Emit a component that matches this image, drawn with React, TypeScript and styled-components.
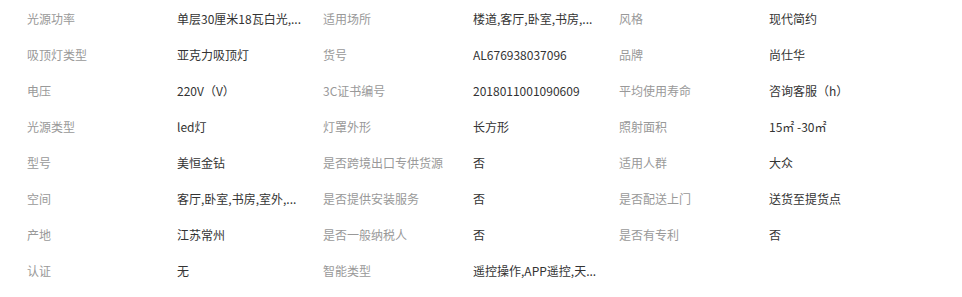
import React from "react";
import styled, { createGlobalStyle } from "styled-components";

const GlobalStyle = createGlobalStyle`
    html, body {
        margin: 0;
        padding: 0;
        background: #fff;
    }
    body {
        font-family: "Noto Sans CJK SC", "Microsoft YaHei", sans-serif;
        font-size: 12px;
    }
`;

interface Attr {
    name: string;
    value: string;
    full?: string;
}

// values are shown as the page shows them; the full text goes in the title
const attrs: Attr[] = [
    { name: "光源功率", value: "单层30厘米18瓦白光,...", full: "单层30厘米18瓦白光,单层40厘米24瓦三色光" },
    { name: "适用场所", value: "楼道,客厅,卧室,书房,...", full: "楼道,客厅,卧室,书房,餐厅,阳台" },
    { name: "风格", value: "现代简约" },
    { name: "吸顶灯类型", value: "亚克力吸顶灯" },
    { name: "货号", value: "AL676938037096" },
    { name: "品牌", value: "尚仕华" },
    { name: "电压", value: "220V（V）" },
    { name: "3C证书编号", value: "2018011001090609" },
    { name: "平均使用寿命", value: "咨询客服（h）" },
    { name: "光源类型", value: "led灯" },
    { name: "灯罩外形", value: "长方形" },
    { name: "照射面积", value: "15㎡ -30㎡" },
    { name: "型号", value: "美恒金钻" },
    { name: "是否跨境出口专供货源", value: "否" },
    { name: "适用人群", value: "大众" },
    { name: "空间", value: "客厅,卧室,书房,室外,...", full: "客厅,卧室,书房,室外,餐厅" },
    { name: "是否提供安装服务", value: "否" },
    { name: "是否配送上门", value: "送货至提货点" },
    { name: "产地", value: "江苏常州" },
    { name: "是否一般纳税人", value: "否" },
    { name: "是否有专利", value: "否" },
    { name: "认证", value: "无" },
    { name: "智能类型", value: "遥控操作,APP遥控,天...", full: "遥控操作,APP遥控,天猫精灵" },
];

const AttrList = styled.ul`
    list-style: none;
    margin: 0;
    padding: 1px 0 0 27px;
    display: grid;
    grid-template-columns: repeat(3, 296px);
    grid-auto-rows: 36px;
`;

const AttrItem = styled.li`
    display: flex;
    align-items: center;
    white-space: nowrap;
    line-height: 18px;
`;

const AttrName = styled.span`
    flex: 0 0 150px;
    color: #999;
`;

const AttrValue = styled.span`
    color: #333;
`;

export default function App() {
    return (
        <>
            <GlobalStyle />
            <AttrList>
                {attrs.map((a) => (
                    <AttrItem key={a.name}>
                        <AttrName>{a.name}</AttrName>
                        <AttrValue title={a.full || a.value}>{a.value}</AttrValue>
                    </AttrItem>
                ))}
            </AttrList>
        </>
    );
}
